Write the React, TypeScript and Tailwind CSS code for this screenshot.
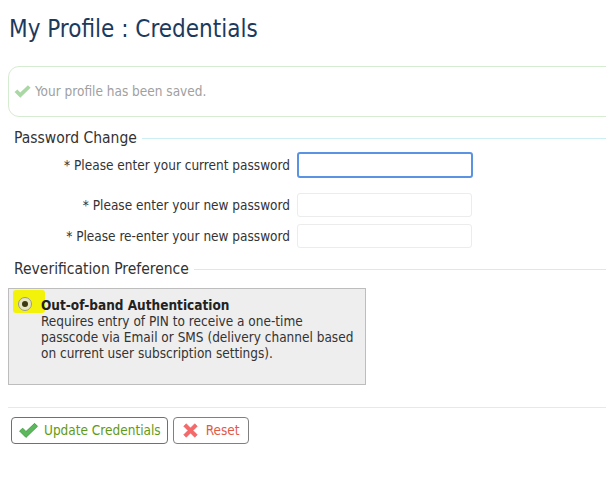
import React from "react";

const F = { fontFamily: '"DejaVu Sans Condensed", "DejaVu Sans", Tahoma, sans-serif' };

function Check({ className, fill, stroke }: { className?: string; fill: string; stroke?: string }) {
  return (
    <svg viewBox="0 0 20 16" className={className}>
      <path
        d="M1.5 8.5 L4.5 5.8 L7.6 9 L15.8 1.2 L18.6 4 L7.6 14.6 Z"
        fill={fill}
        stroke={stroke ?? "none"}
        strokeWidth={stroke ? 0.8 : 0}
        strokeLinejoin="round"
      />
    </svg>
  );
}

function XIcon({ className }: { className?: string }) {
  return (
    <svg viewBox="0 0 20 20" className={className}>
      <path
        d="M2 5 L5 2 L10 7 L15 2 L18 5 L13 10 L18 15 L15 18 L10 13 L5 18 L2 15 L7 10 Z"
        fill="#f46a6a"
        stroke="#e85555"
        strokeWidth="0.6"
        strokeLinejoin="round"
      />
    </svg>
  );
}

function Legend({ children }: { children: React.ReactNode }) {
  return (
    <div className="flex items-center h-[18px] pl-[6px]">
      <span className="text-[15.5px] leading-[18px] text-[#333]">{children}</span>
      <div className="flex-1 ml-[5px] border-t border-[#cdeef5]" />
    </div>
  );
}

function Row({ label, focused, className }: { label: string; focused?: boolean; className?: string }) {
  return (
    <div className={`flex items-center ${className ?? ""}`}>
      <div className="w-[282px] text-right text-[13.5px] text-[#333] whitespace-nowrap">
        <span className="text-[#333]">*</span> {label}
      </div>
      <div className="ml-[7px]">
        {focused ? (
          <div className="w-[176px] h-[26px] rounded-[3px] border-2 border-[#5b93e3] bg-white" />
        ) : (
          <div className="w-[175px] h-[24px] rounded-[3px] border border-[#ececec] bg-white" />
        )}
      </div>
    </div>
  );
}

export default function App() {
  return (
    <div className="w-[606px] h-[489px] overflow-hidden bg-white text-[#333]" style={F}>
      <div className="pl-[8px]">
        <h1 className="pt-[14px] pl-[1px] text-[24px] leading-[30px] text-[#1b3a5e]">My Profile : Credentials</h1>

        <div className="mt-[22px] -mr-[20px] h-[51px] rounded-l-[11px] border border-[#d6ecd0] flex items-center pl-[4px]">
          <Check className="w-[19px] h-[15px]" fill="#a9d8a4" />
          <span className="ml-[3px] text-[13.5px] text-[#a0a0a0]">Your profile has been saved.</span>
        </div>

        <div className="mt-[12px]">
          <Legend>Password Change</Legend>
          <Row label="Please enter your current password" focused className="mt-[5px]" />
          <Row label="Please enter your new password" className="mt-[15px]" />
          <Row label="Please re-enter your new password" className="mt-[7px]" />
        </div>

        <div className="mt-[12px]">
          <Legend>Reverification Preference</Legend>
          <div className="mt-[10px] w-[358px] h-[97px] bg-[#eeeeee] border border-[#bdbdbd] relative">
            <div className="absolute left-[4px] top-[1px] w-[32px] h-[23px] bg-[#f2f20a] rounded-[3px]" />
            <div className="relative flex pt-[8px] pl-[9px]">
              <div className="w-[14px] h-[14px] rounded-full border border-[#9a9a9a] bg-[#e6e6c0] flex items-center justify-center">
                <div className="w-[6px] h-[6px] rounded-full bg-[#3b3b10]" />
              </div>
              <div className="ml-[9px] text-[13.5px] leading-[16px] text-[#333]">
                <div className="font-bold text-[#222]">Out-of-band Authentication</div>
                <div>Requires entry of PIN to receive a one-time</div>
                <div>passcode via Email or SMS (delivery channel based</div>
                <div>on current user subscription settings).</div>
              </div>
            </div>
          </div>
        </div>

        <div className="mt-[22px] border-t border-[#d6eef5]" />

        <div className="mt-[9px] flex gap-[5px] pl-[3px]">
          <button className="h-[27px] px-[6px] rounded-[4px] border border-[#707070] bg-white flex items-center">
            <Check className="w-[21px] h-[17px]" fill="#5cb85c" stroke="#3f9a3f" />
            <span className="ml-[5px] text-[13.5px] text-[#5f9a16]">Update Credentials</span>
          </button>
          <button className="h-[27px] px-[8px] rounded-[4px] border border-[#808080] bg-white flex items-center">
            <XIcon className="w-[17px] h-[17px]" />
            <span className="ml-[7px] text-[13.5px] text-[#e05a48]">Reset</span>
          </button>
        </div>
      </div>
    </div>
  );
}
